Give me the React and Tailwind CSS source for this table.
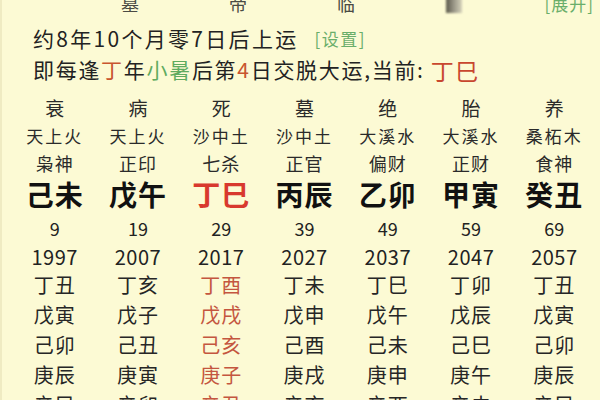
const COLS = 7
const CURRENT = 2

const rows = [
  { cells: ['衰', '病', '死', '墓', '绝', '胎', '养'], cls: 'h-[28px] text-[19px] text-[#2a2a2a]' },
  { cells: ['天上火', '天上火', '沙中土', '沙中土', '大溪水', '大溪水', '桑柘木'], cls: 'h-[28px] text-[17px] tracking-[2px] text-[#2a2a2a]' },
  { cells: ['枭神', '正印', '七杀', '正官', '偏财', '正财', '食神'], cls: 'h-[27px] text-[18px] tracking-[1px] text-[#2a2a2a]' },
  { cells: ['己未', '戊午', '丁巳', '丙辰', '乙卯', '甲寅', '癸丑'], cls: 'h-[36px] text-[28px] font-bold tracking-[1px] text-[#111]', big: true },
  { cells: ['9', '19', '29', '39', '49', '59', '69'], cls: 'h-[32px] text-[18px] text-[#222]' },
  { cells: ['1997', '2007', '2017', '2027', '2037', '2047', '2057'], cls: 'h-[26px] text-[20px] tracking-[0.5px] text-[#222]' },
  { cells: ['丁丑', '丁亥', '丁酉', '丁未', '丁巳', '丁卯', '丁丑'], cls: 'h-[29px] text-[20px] tracking-[1px] text-[#262626]', year: true },
  { cells: ['戊寅', '戊子', '戊戌', '戊申', '戊午', '戊辰', '戊寅'], cls: 'h-[31px] text-[20px] tracking-[1px] text-[#262626]', year: true },
  { cells: ['己卯', '己丑', '己亥', '己酉', '己未', '己巳', '己卯'], cls: 'h-[30px] text-[20px] tracking-[1px] text-[#262626]', year: true },
  { cells: ['庚辰', '庚寅', '庚子', '庚戌', '庚申', '庚午', '庚辰'], cls: 'h-[30px] text-[20px] tracking-[1px] text-[#262626]', year: true },
  { cells: ['辛巳', '辛卯', '辛丑', '辛亥', '辛酉', '辛未', '辛巳'], cls: 'h-[30px] text-[20px] tracking-[1px] text-[#262626]', year: true },
]

function cellColor(row, i) {
  if (i !== CURRENT) return ''
  if (row.big) return 'text-[#d8392e]'
  if (row.year) return 'text-[#c4563f]'
  return ''
}

export default function App() {
  return (
    <div
      className="h-[400px] w-[600px] overflow-hidden border-l-[2px] border-[#efebc2] bg-[#fcfad4]"
      style={{ fontFamily: '"Noto Sans CJK SC", "Noto Sans", sans-serif' }}
    >
      {/* top row, cut off by the screen edge */}
      <div className="-mt-[8px] flex h-[22px] items-center text-[18px] leading-none text-[#4a4a44]">
        <div className="w-[74px]" />
        <div className="w-[108px] text-center">墓</div>
        <div className="w-[108px] text-center">帝</div>
        <div className="w-[108px] text-center">临</div>
        <div className="flex w-[108px] justify-center">
          <div className="h-[20px] w-[16px] bg-gradient-to-r from-[#5c5a4c] via-[#9b9889] to-[#d6d3bb] blur-[1px]" />
        </div>
        <div className="ml-auto pr-[6px] text-[17px] tracking-[1px] text-[#6aae6a]">[展开]</div>
      </div>

      <div className="mt-[10px] flex h-[30px] items-center pl-[31px] text-[21px] tracking-[2.3px] text-[#222]">
        <span>约8年10个月零7日后上运</span>
        <span className="ml-[16px] text-[17px] tracking-[1.5px] text-[#6aae6a]">[设置]</span>
      </div>

      <div className="flex h-[32px] items-center pl-[31px] text-[21px] tracking-[1.7px] text-[#222]">
        <span>即每逢</span>
        <span className="text-[#c8552f]">丁</span>
        <span>年</span>
        <span className="text-[#5fab5f]">小暑</span>
        <span>后第</span>
        <span className="text-[#c8552f]">4</span>
        <span>日交脱大运,当前: </span>
        <span className="ml-[6px] text-[23px] text-[#c8472f]">丁巳</span>
      </div>

      <div className="ml-[11px] mt-[7px] w-[583px]">
        {rows.map((row, r) => (
          <div key={r} className={`grid grid-cols-7 items-center ${row.cls}`}>
            {row.cells.slice(0, COLS).map((c, i) => (
              <div key={i} className={`text-center leading-none ${cellColor(row, i)}`}>
                {c}
              </div>
            ))}
          </div>
        ))}
      </div>
    </div>
  )
}
